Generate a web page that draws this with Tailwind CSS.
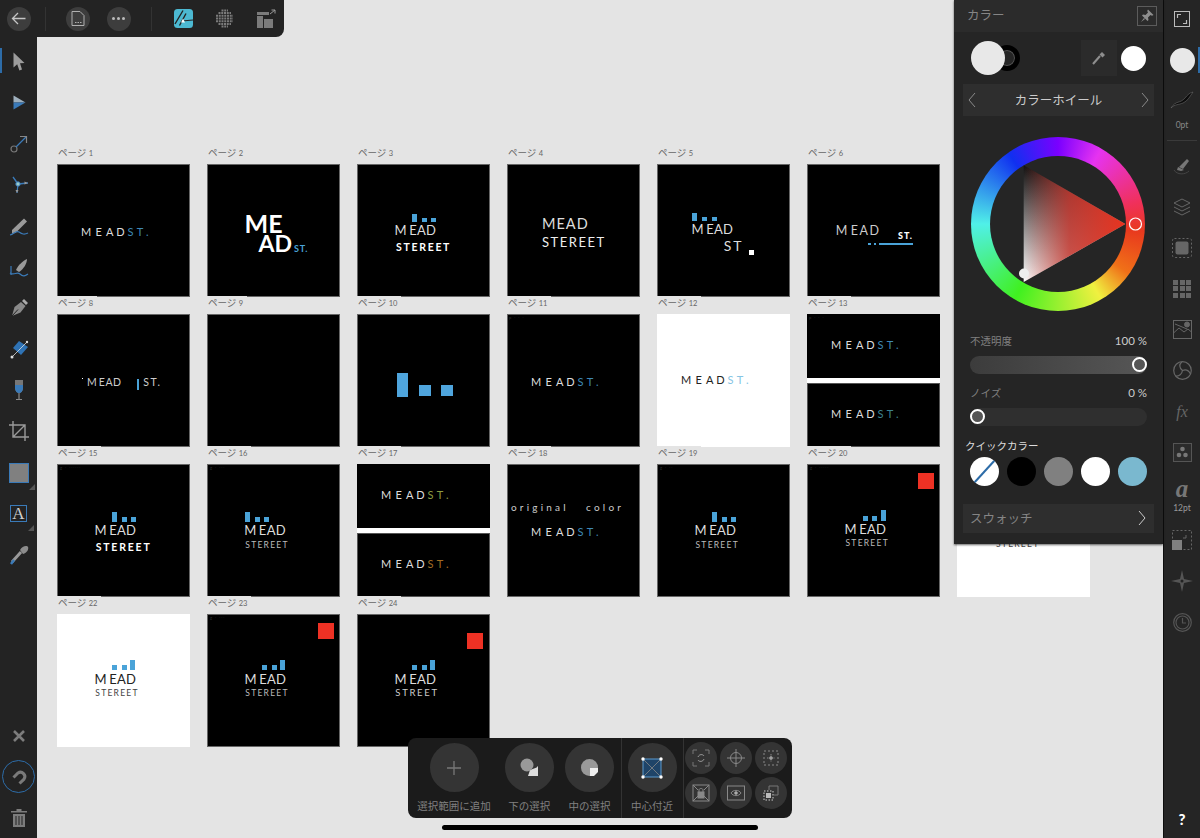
<!DOCTYPE html>
<html lang="ja">
  <head>
    <meta charset="UTF-8" />
    <meta name="viewport" content="width=device-width, initial-scale=1.0" />
    <title>Affinity Designer</title>
    <script src="https://cdn.jsdelivr.net/npm/@tailwindcss/browser@4"></script>
  </head>
  <body>
    <div class="relative flex w-[1200px] h-[838px] overflow-hidden bg-[#e4e4e4] font-['Lato','Noto_Sans_CJK_JP',sans-serif]">

      <!-- left tools -->
      <aside class="relative flex flex-col items-center w-[37px] shrink-0 pt-[40.5px] bg-[#232323]">
        <div class="absolute left-0 top-[48px] w-[2px] h-[25px] bg-[#2d6ca8]"></div>
        <div class="flex items-center justify-center h-[41.25px]"><svg class="w-6 h-6" viewBox="0 0 24 24"><path d="M6.5 3.5 17.5 14 13 14.2 15 20.5 12.4 21.5 10.2 15.3 6.5 18.5Z" fill="#9c9c9c"/></svg></div>
        <div class="flex items-center justify-center h-[41.25px]"><svg class="w-6 h-6" viewBox="0 0 24 24"><path d="M6.5 5.5 18.5 12.5 6.5 12.5Z" fill="#9fb0bd"/><path d="M6.5 12.5H18.5L6.5 19.5Z" fill="#3a7ab8"/></svg></div>
        <div class="flex items-center justify-center h-[41.25px]"><svg class="w-6 h-6" viewBox="0 0 24 24" fill="none"><circle cx="7" cy="18" r="3" stroke="#777" stroke-width="1.2"/><path d="M9 16 19 6" stroke="#3a7ab8" stroke-width="1.3"/><path d="M13 5.5H19.5V12" stroke="#888" stroke-width="1.2"/></svg></div>
        <div class="flex items-center justify-center h-[41.25px]"><svg class="w-6 h-6" viewBox="0 0 24 24" fill="none"><path d="M6 4 11 11M21 10 11 11M10 20 11 11" stroke="#3a7ab8" stroke-width="1.3"/><path d="M21 10 17.5 8.5V11.5ZM10 20 8.5 17H11.5Z" fill="#999"/><circle cx="11" cy="11" r="2.2" fill="#9cc" stroke="#3a7ab8"/></svg></div>
        <div class="flex items-center justify-center h-[41.25px]"><svg class="w-6 h-6" viewBox="0 0 24 24" fill="none"><path d="M5 16 17 4.500 20 7.500 8.500 19 5 19.500Z" fill="#9a9a9a"/><path d="M3 21C7 20 9 16 12 18S17 21 21 19" stroke="#3a7ab8" stroke-width="1.2"/></svg></div>
        <div class="flex items-center justify-center h-[41.25px]"><svg class="w-6 h-6" viewBox="0 0 24 24" fill="none"><path d="M9 15C11 10 16 6 20 4 20 8 17 14 12 17Z" fill="#9a9a9a"/><path d="M4 11V20M3 18C7 21 10 16 13 19S18 21 21 19" stroke="#3a7ab8" stroke-width="1.2"/></svg></div>
        <div class="flex items-center justify-center h-[41.25px]"><svg class="w-6 h-6" viewBox="0 0 24 24" fill="none"><path d="M5 20 7.500 11 14 6 18.500 10 13.500 16.500Z" fill="#8a8a8a"/><path d="M5 20 11 13.500" stroke="#232323" stroke-width="1"/><path d="M15 5 17 3 21 7 19 9Z" fill="#aaa"/></svg></div>
        <div class="flex items-center justify-center h-[41.25px]"><svg class="w-6 h-6" viewBox="0 0 24 24"><path d="M12 4 21 10 14 18 6 11Z" fill="#2f73b5"/><path d="M5 20 20 5" stroke="#ddd" stroke-width=".8"/><circle cx="5" cy="20" r="1.500" fill="#ddd"/><circle cx="20" cy="5" r="1.200" fill="#ddd"/></svg></div>
        <div class="flex items-center justify-center h-[41.25px]"><svg class="w-6 h-6" viewBox="0 0 24 24"><path d="M8 2H16V10C16 13 14 15 12 15S8 13 8 10Z" fill="#777"/><path d="M8 7H16V10C16 13 14 15 12 15S8 13 8 10Z" fill="#3a7ab8"/><path d="M11.400 15H12.600V21H15V22H9V21H11.400Z" fill="#8a8a8a"/></svg></div>
        <div class="flex items-center justify-center h-[41.25px]"><svg class="w-6 h-6" viewBox="0 0 24 24" fill="none" stroke="#9a9a9a" stroke-width="1.4"><path d="M6 2V18H22M2 6H18V22M6 18 18 6"/></svg></div>
        <div class="relative flex items-center justify-center h-[41.25px]"><div class="w-[18px] h-[18px] bg-[#808080] outline outline-1 outline-[#3a7ab8]"></div><svg class="absolute right-[-7px] bottom-[3px] w-[6px] h-[6px]" viewBox="0 0 6 6"><path d="M6 0V6H0Z" fill="#555"/></svg></div>
        <div class="relative flex items-center justify-center h-[41.25px]"><div class="flex items-center justify-center w-[17px] h-[17px] border border-[#3a7ab8] text-[17px] leading-none text-[#cfcfcf] font-['Liberation_Serif',serif]">A</div><svg class="absolute right-[-7px] bottom-[3px] w-[6px] h-[6px]" viewBox="0 0 6 6"><path d="M6 0V6H0Z" fill="#555"/></svg></div>
        <div class="flex items-center justify-center h-[41.25px]"><svg class="w-6 h-6" viewBox="0 0 24 24" fill="none"><path d="M5 19 14 9" stroke="#999" stroke-width="3"/><path d="M4 21 7 17" stroke="#3a7ab8" stroke-width="2.500"/><path d="M13 7C15 3 20 2 21 4S20 10 16 11Z" fill="#8c8c8c"/></svg></div>

        <div class="flex items-center justify-center h-[41px] mt-[139.75px]"><svg class="w-[14px] h-[14px]" viewBox="0 0 14 14"><path d="M2 2 12 12M12 2 2 12" stroke="#7c7c7c" stroke-width="2.600"/></svg></div>
        <div class="flex items-center justify-center h-[41px]"><div class="flex items-center justify-center w-[33px] h-[33px] shrink-0 rounded-full border border-[#2d6ca8]"><svg class="w-[18px] h-[18px]" viewBox="0 0 18 18" fill="none"><path d="M3.500 9.500 8 5A4.400 4.400 0 0 1 14 11.200L9.500 15.500" stroke="#7a7a7a" stroke-width="3"/></svg></div></div>
        <div class="flex items-center justify-center h-[41px]"><svg class="w-[18px] h-[20px]" viewBox="0 0 18 20" fill="#7c7c7c"><path d="M1 3H17V4.500H1ZM6.500 1H11.500V3H6.500ZM3 6H15V19H3Z"/><path d="M6 8V17M9 8V17M12 8V17" stroke="#232323" stroke-width="1"/></svg></div>
      </aside>

      <!-- artboards -->
      <main class="flex-1 pl-[20px] pt-[147px]">
        <div class="grid grid-cols-[repeat(7,133px)] gap-x-[17px]">

          <div>
            <p class="relative z-10 w-fit h-[18px] -mt-px pl-[1px] pr-1 bg-[#e4e4e4] text-[9.5px] leading-[14px] text-[#666] whitespace-nowrap">ページ <span class="text-[7.5px]">1</span></p>
            <div class="relative h-[133px] overflow-hidden bg-black ring-1 ring-inset ring-[#666]">
              <p class="absolute left-[24px] top-[62.4px] text-[11px] leading-none text-[#ddd] whitespace-nowrap"><span class="tracking-[4.2px]">ME</span><span class="tracking-[2.8px]">AD</span><span class="tracking-[3.4px] text-[#3f88b5]">ST.</span></p>
            </div>
          </div>
          <div>
            <p class="relative z-10 w-fit h-[18px] -mt-px pl-[1px] pr-1 bg-[#e4e4e4] text-[9.5px] leading-[14px] text-[#666] whitespace-nowrap">ページ <span class="text-[7.5px]">2</span></p>
            <div class="relative h-[133px] overflow-hidden bg-black ring-1 ring-inset ring-[#666]">
              <p class="absolute left-[37.5px] top-[47px] text-[25px] leading-none font-bold text-white">ME</p>
              <p class="absolute left-[51.5px] top-[68px] text-[23px] leading-none font-bold text-white">AD</p>
              <p class="absolute left-[87px] top-[79.5px] text-[9px] leading-none font-bold tracking-[.7px] text-[#4aa3d8]">ST.</p>
            </div>
          </div>
          <div>
            <p class="relative z-10 w-fit h-[18px] -mt-px pl-[1px] pr-1 bg-[#e4e4e4] text-[9.5px] leading-[14px] text-[#666] whitespace-nowrap">ページ <span class="text-[7.5px]">3</span></p>
            <div class="relative h-[133px] overflow-hidden bg-black ring-1 ring-inset ring-[#666]">
              <div class="absolute left-[54.5px] top-[50px] w-[5px] h-[8px] bg-[#4aa3d8]"></div>
              <div class="absolute left-[64.5px] top-[53.5px] w-[5px] h-[4.5px] bg-[#4aa3d8]"></div>
              <div class="absolute left-[74px] top-[53.5px] w-[5px] h-[4.5px] bg-[#4aa3d8]"></div>
              <p class="absolute left-[37.5px] top-[59.9px] text-[13px] leading-none text-[#ddd] whitespace-nowrap"><span class="tracking-[2.6px]">M</span><span class="tracking-[.3px]">EAD</span></p>
              <p class="absolute left-[39px] top-[77.5px] text-[10.5px] leading-none font-bold tracking-[1.7px] text-white whitespace-nowrap">STEREET</p>
            </div>
          </div>
          <div>
            <p class="relative z-10 w-fit h-[18px] -mt-px pl-[1px] pr-1 bg-[#e4e4e4] text-[9.5px] leading-[14px] text-[#666] whitespace-nowrap">ページ <span class="text-[7.5px]">4</span></p>
            <div class="relative h-[133px] overflow-hidden bg-black ring-1 ring-inset ring-[#666]">
              <p class="absolute left-[35px] top-[52.8px] text-[14.5px] leading-none tracking-[1px] text-[#ddd] whitespace-nowrap">MEAD</p>
              <p class="absolute left-[35px] top-[71.5px] text-[13px] leading-none tracking-[1.5px] text-[#eee] whitespace-nowrap">STEREET</p>
            </div>
          </div>
          <div>
            <p class="relative z-10 w-fit h-[18px] -mt-px pl-[1px] pr-1 bg-[#e4e4e4] text-[9.5px] leading-[14px] text-[#666] whitespace-nowrap">ページ <span class="text-[7.5px]">5</span></p>
            <div class="relative h-[133px] overflow-hidden bg-black ring-1 ring-inset ring-[#666]">
              <div class="absolute left-[35.3px] top-[49.3px] w-[5px] h-[8px] bg-[#4aa3d8]"></div>
              <div class="absolute left-[45px] top-[52.7px] w-[5px] h-[4.7px] bg-[#4aa3d8]"></div>
              <div class="absolute left-[54.7px] top-[52.7px] w-[5px] h-[4.7px] bg-[#4aa3d8]"></div>
              <p class="absolute left-[34.5px] top-[58.9px] text-[13px] leading-none text-[#ddd] whitespace-nowrap"><span class="tracking-[2.6px]">M</span><span class="tracking-[.3px]">EAD</span></p>
              <p class="absolute left-[66.7px] top-[75.3px] text-[14px] leading-none tracking-[2px] text-[#ddd]">ST</p>
              <div class="absolute left-[92.3px] top-[86.3px] w-[5px] h-[5px] bg-white"></div>
            </div>
          </div>
          <div>
            <p class="relative z-10 w-fit h-[18px] -mt-px pl-[1px] pr-1 bg-[#e4e4e4] text-[9.5px] leading-[14px] text-[#666] whitespace-nowrap">ページ <span class="text-[7.5px]">6</span></p>
            <div class="relative h-[133px] overflow-hidden bg-black ring-1 ring-inset ring-[#666]">
              <p class="absolute left-[28.7px] top-[60.6px] text-[12.5px] leading-none text-[#ccc] whitespace-nowrap"><span class="tracking-[3.5px]">M</span><span class="tracking-[1.5px]">EAD</span></p>
              <p class="absolute left-[91px] top-[67px] text-[9px] leading-none font-black tracking-[1px] text-white">ST.</p>
              <div class="absolute left-[60.7px] top-[78.5px] w-[3.3px] h-[2px] bg-[#4aa3d8]"></div>
              <div class="absolute left-[66.7px] top-[78.5px] w-[2.3px] h-[2px] bg-[#4aa3d8]"></div>
              <div class="absolute left-[72px] top-[78.5px] w-[34.3px] h-[2px] bg-[#4aa3d8]"></div>
            </div>
          </div>
          <div class="h-[150px]"></div>

          <div>
            <p class="relative z-10 w-fit h-[18px] -mt-px pl-[1px] pr-1 bg-[#e4e4e4] text-[9.5px] leading-[14px] text-[#666] whitespace-nowrap">ページ <span class="text-[7.5px]">8</span></p>
            <div class="relative h-[133px] overflow-hidden bg-black ring-1 ring-inset ring-[#666]">
              <div class="absolute left-[25px] top-[63.5px] w-px h-px bg-white"></div>
              <p class="absolute left-[30px] top-[63.2px] text-[10.5px] leading-none text-[#ccc] whitespace-nowrap"><span class="tracking-[2px]">M</span><span class="tracking-[.6px]">EAD</span></p>
              <div class="absolute left-[79.5px] top-[65px] w-[2.5px] h-[10.5px] bg-[#4aa3d8]"></div>
              <p class="absolute left-[86.3px] top-[63.2px] text-[10.5px] leading-none tracking-[1.5px] text-[#ccc]">ST.</p>
            </div>
          </div>
          <div>
            <p class="relative z-10 w-fit h-[18px] -mt-px pl-[1px] pr-1 bg-[#e4e4e4] text-[9.5px] leading-[14px] text-[#666] whitespace-nowrap">ページ <span class="text-[7.5px]">9</span></p>
            <div class="relative h-[133px] overflow-hidden bg-black ring-1 ring-inset ring-[#666]"></div>
          </div>
          <div>
            <p class="relative z-10 w-fit h-[18px] -mt-px pl-[1px] pr-1 bg-[#e4e4e4] text-[9.5px] leading-[14px] text-[#666] whitespace-nowrap">ページ <span class="text-[7.5px]">10</span></p>
            <div class="relative h-[133px] overflow-hidden bg-black ring-1 ring-inset ring-[#666]">
              <div class="absolute left-[39.5px] top-[59px] w-[11.5px] h-[23.5px] bg-[#4fa5dd]"></div>
              <div class="absolute left-[62.3px] top-[70.7px] w-[11.5px] h-[11.7px] bg-[#4fa5dd]"></div>
              <div class="absolute left-[84.3px] top-[70.7px] w-[11.5px] h-[11.7px] bg-[#4fa5dd]"></div>
            </div>
          </div>
          <div>
            <p class="relative z-10 w-fit h-[18px] -mt-px pl-[1px] pr-1 bg-[#e4e4e4] text-[9.5px] leading-[14px] text-[#666] whitespace-nowrap">ページ <span class="text-[7.5px]">11</span></p>
            <div class="relative h-[133px] overflow-hidden bg-black ring-1 ring-inset ring-[#666]">
              <p class="absolute left-[2px] top-[2px] text-[4px] leading-none tracking-[1px] text-[#333]">p · · ·</p>
              <p class="absolute left-[24px] top-[61.9px] text-[11px] leading-none text-[#ddd] whitespace-nowrap"><span class="tracking-[4.2px]">ME</span><span class="tracking-[2.8px]">AD</span><span class="tracking-[3.4px] text-[#3f88b5]">ST.</span></p>
            </div>
          </div>
          <div>
            <p class="relative z-10 w-fit h-[18px] -mt-px pl-[1px] pr-1 bg-[#e4e4e4] text-[9.5px] leading-[14px] text-[#666] whitespace-nowrap">ページ <span class="text-[7.5px]">12</span></p>
            <div class="relative h-[133px] overflow-hidden bg-white">
              <p class="absolute left-[24px] top-[60.1px] text-[11px] leading-none text-[#222] whitespace-nowrap"><span class="tracking-[4.2px]">ME</span><span class="tracking-[2.8px]">AD</span><span class="tracking-[3.4px] text-[#86c5e4]">ST.</span></p>
            </div>
          </div>
          <div>
            <p class="relative z-10 w-fit h-[18px] -mt-px pl-[1px] pr-1 bg-[#e4e4e4] text-[9.5px] leading-[14px] text-[#666] whitespace-nowrap">ページ <span class="text-[7.5px]">13</span></p>
            <div class="flex flex-col justify-between h-[133px] bg-white">
              <div class="relative h-[64px] overflow-hidden bg-black">
                <p class="absolute left-[2px] top-[2px] text-[4px] leading-none tracking-[1px] text-[#333]">p · · ·</p>
                <p class="absolute left-[24px] top-[25.4px] text-[11px] leading-none text-[#ddd] whitespace-nowrap"><span class="tracking-[4.2px]">ME</span><span class="tracking-[2.8px]">AD</span><span class="tracking-[3.4px] text-[#3f88b5]">ST.</span></p>
              </div>
              <div class="relative h-[64px] overflow-hidden bg-black ring-1 ring-inset ring-[#555]">
                <p class="absolute left-[24px] top-[25.4px] text-[11px] leading-none text-[#ddd] whitespace-nowrap"><span class="tracking-[4.2px]">ME</span><span class="tracking-[2.8px]">AD</span><span class="tracking-[3.4px] text-[#3d8290]">ST.</span></p>
              </div>
            </div>
          </div>
          <div class="h-[150px]"></div>

          <div>
            <p class="relative z-10 w-fit h-[18px] -mt-px pl-[1px] pr-1 bg-[#e4e4e4] text-[9.5px] leading-[14px] text-[#666] whitespace-nowrap">ページ <span class="text-[7.5px]">15</span></p>
            <div class="relative h-[133px] overflow-hidden bg-black ring-1 ring-inset ring-[#666]">
              <p class="absolute left-[3px] top-[2px] text-[4px] leading-none tracking-[1px] text-[#333]">g · ······</p>
              <div class="absolute left-[55.3px] top-[47.7px] w-[5px] h-[10.3px] bg-[#4aa3d8]"></div>
              <div class="absolute left-[64.7px] top-[53.3px] w-[5px] h-[4.7px] bg-[#4aa3d8]"></div>
              <div class="absolute left-[73.7px] top-[53.3px] w-[5px] h-[4.7px] bg-[#4aa3d8]"></div>
              <p class="absolute left-[37.5px] top-[59.9px] text-[13px] leading-none text-[#ddd] whitespace-nowrap"><span class="tracking-[2.6px]">M</span><span class="tracking-[.3px]">EAD</span></p>
              <p class="absolute left-[38.7px] top-[78px] text-[10.5px] leading-none font-bold tracking-[1.8px] text-white whitespace-nowrap">STEREET</p>
            </div>
          </div>
          <div>
            <p class="relative z-10 w-fit h-[18px] -mt-px pl-[1px] pr-1 bg-[#e4e4e4] text-[9.5px] leading-[14px] text-[#666] whitespace-nowrap">ページ <span class="text-[7.5px]">16</span></p>
            <div class="relative h-[133px] overflow-hidden bg-black ring-1 ring-inset ring-[#666]">
              <p class="absolute left-[3px] top-[2px] text-[4px] leading-none tracking-[1px] text-[#333]">g · ···</p>
              <div class="absolute left-[38.3px] top-[47.7px] w-[5px] h-[10.3px] bg-[#4aa3d8]"></div>
              <div class="absolute left-[47.7px] top-[53.3px] w-[5px] h-[4.7px] bg-[#4aa3d8]"></div>
              <div class="absolute left-[57px] top-[53.3px] w-[5px] h-[4.7px] bg-[#4aa3d8]"></div>
              <p class="absolute left-[37.2px] top-[59.9px] text-[13px] leading-none text-[#ddd] whitespace-nowrap"><span class="tracking-[2.6px]">M</span><span class="tracking-[.3px]">EAD</span></p>
              <p class="absolute left-[38.3px] top-[76.9px] text-[8.5px] leading-none tracking-[1.25px] text-[#bbb] whitespace-nowrap">STEREET</p>
            </div>
          </div>
          <div>
            <p class="relative z-10 w-fit h-[18px] -mt-px pl-[1px] pr-1 bg-[#e4e4e4] text-[9.5px] leading-[14px] text-[#666] whitespace-nowrap">ページ <span class="text-[7.5px]">17</span></p>
            <div class="flex flex-col justify-between h-[133px] bg-white">
              <div class="relative h-[64px] overflow-hidden bg-black">
                <p class="absolute left-[24px] top-[25.4px] text-[11px] leading-none text-[#ddd] whitespace-nowrap"><span class="tracking-[4.2px]">ME</span><span class="tracking-[2.8px]">AD</span><span class="tracking-[3.4px] text-[#8c9c42]">ST.</span></p>
              </div>
              <div class="relative h-[64px] overflow-hidden bg-black ring-1 ring-inset ring-[#555]">
                <p class="absolute left-[24px] top-[25.4px] text-[11px] leading-none text-[#ddd] whitespace-nowrap"><span class="tracking-[4.2px]">ME</span><span class="tracking-[2.8px]">AD</span><span class="tracking-[3.4px] text-[#a26c24]">ST.</span></p>
              </div>
            </div>
          </div>
          <div>
            <p class="relative z-10 w-fit h-[18px] -mt-px pl-[1px] pr-1 bg-[#e4e4e4] text-[9.5px] leading-[14px] text-[#666] whitespace-nowrap">ページ <span class="text-[7.5px]">18</span></p>
            <div class="relative h-[133px] overflow-hidden bg-black ring-1 ring-inset ring-[#666]">
              <p class="absolute left-[4px] top-[38px] text-[10px] leading-none tracking-[3.2px] text-[#ccc] whitespace-pre">original   color</p>
              <p class="absolute left-[24px] top-[61.9px] text-[11px] leading-none text-[#ddd] whitespace-nowrap"><span class="tracking-[4.2px]">ME</span><span class="tracking-[2.8px]">AD</span><span class="tracking-[3.4px] text-[#3f88b5]">ST.</span></p>
            </div>
          </div>
          <div>
            <p class="relative z-10 w-fit h-[18px] -mt-px pl-[1px] pr-1 bg-[#e4e4e4] text-[9.5px] leading-[14px] text-[#666] whitespace-nowrap">ページ <span class="text-[7.5px]">19</span></p>
            <div class="relative h-[133px] overflow-hidden bg-black ring-1 ring-inset ring-[#666]">
              <p class="absolute left-[3px] top-[2px] text-[4px] leading-none tracking-[1px] text-[#333]">g · ··</p>
              <div class="absolute left-[55.4px] top-[47.7px] w-[5px] h-[10.3px] bg-[#4aa3d8]"></div>
              <div class="absolute left-[65px] top-[53.3px] w-[5px] h-[4.7px] bg-[#4aa3d8]"></div>
              <div class="absolute left-[74px] top-[53.3px] w-[5px] h-[4.7px] bg-[#4aa3d8]"></div>
              <p class="absolute left-[37.5px] top-[59.9px] text-[13px] leading-none text-[#ddd] whitespace-nowrap"><span class="tracking-[2.6px]">M</span><span class="tracking-[.3px]">EAD</span></p>
              <p class="absolute left-[38.5px] top-[76.9px] text-[8.5px] leading-none tracking-[1.25px] text-[#bbb] whitespace-nowrap">STEREET</p>
            </div>
          </div>
          <div>
            <p class="relative z-10 w-fit h-[18px] -mt-px pl-[1px] pr-1 bg-[#e4e4e4] text-[9.5px] leading-[14px] text-[#666] whitespace-nowrap">ページ <span class="text-[7.5px]">20</span></p>
            <div class="relative h-[133px] overflow-hidden bg-black ring-1 ring-inset ring-[#666]">
              <p class="absolute left-[3px] top-[2px] text-[4px] leading-none tracking-[1px] text-[#333]">g · ·····</p>
              <div class="absolute left-[110.7px] top-[9px] w-[16px] h-[16px] bg-[#ee3124]"></div>
              <div class="absolute left-[55.8px] top-[51.5px] w-[5px] h-[5px] bg-[#4aa3d8]"></div>
              <div class="absolute left-[65px] top-[51.5px] w-[5px] h-[5px] bg-[#4aa3d8]"></div>
              <div class="absolute left-[74px] top-[46px] w-[5px] h-[10.5px] bg-[#4aa3d8]"></div>
              <p class="absolute left-[37.5px] top-[58.9px] text-[13px] leading-none text-[#ddd] whitespace-nowrap"><span class="tracking-[2.6px]">M</span><span class="tracking-[.3px]">EAD</span></p>
              <p class="absolute left-[38.5px] top-[75.3px] text-[8.5px] leading-none tracking-[1.25px] text-[#bbb] whitespace-nowrap">STEREET</p>
            </div>
          </div>
          <div>
            <p class="relative z-10 w-fit h-[18px] -mt-px pl-[1px] pr-1 bg-[#e4e4e4] text-[9.5px] leading-[14px] text-[#666] whitespace-nowrap">ページ <span class="text-[7.5px]">21</span></p>
            <div class="relative h-[133px] overflow-hidden bg-white">
              <p class="absolute left-[39px] top-[75.5px] text-[8.5px] leading-none tracking-[1.25px] text-[#444] whitespace-nowrap">STEREET</p>
            </div>
          </div>

          <div>
            <p class="relative z-10 w-fit h-[18px] -mt-px pl-[1px] pr-1 bg-[#e4e4e4] text-[9.5px] leading-[14px] text-[#666] whitespace-nowrap">ページ <span class="text-[7.5px]">22</span></p>
            <div class="relative h-[133px] overflow-hidden bg-white">
              <div class="absolute left-[55.3px] top-[50.7px] w-[5px] h-[5px] bg-[#4aa3d8]"></div>
              <div class="absolute left-[64.7px] top-[50.7px] w-[5px] h-[5px] bg-[#4aa3d8]"></div>
              <div class="absolute left-[73.3px] top-[45.7px] w-[5px] h-[10px] bg-[#4aa3d8]"></div>
              <p class="absolute left-[37.5px] top-[58.6px] text-[13px] leading-none text-[#222] whitespace-nowrap"><span class="tracking-[2.6px]">M</span><span class="tracking-[.3px]">EAD</span></p>
              <p class="absolute left-[38.3px] top-[74.9px] text-[8.5px] leading-none tracking-[1.25px] text-[#444] whitespace-nowrap">STEREET</p>
            </div>
          </div>
          <div>
            <p class="relative z-10 w-fit h-[18px] -mt-px pl-[1px] pr-1 bg-[#e4e4e4] text-[9.5px] leading-[14px] text-[#666] whitespace-nowrap">ページ <span class="text-[7.5px]">23</span></p>
            <div class="relative h-[133px] overflow-hidden bg-black ring-1 ring-inset ring-[#666]">
              <p class="absolute left-[3px] top-[2px] text-[4px] leading-none tracking-[1px] text-[#333]">g · ···</p>
              <div class="absolute left-[110.7px] top-[8.7px] w-[16px] h-[16px] bg-[#ee3124]"></div>
              <div class="absolute left-[55.3px] top-[50.7px] w-[5px] h-[5px] bg-[#4aa3d8]"></div>
              <div class="absolute left-[64.7px] top-[50.7px] w-[5px] h-[5px] bg-[#4aa3d8]"></div>
              <div class="absolute left-[73.3px] top-[45.7px] w-[5px] h-[10px] bg-[#4aa3d8]"></div>
              <p class="absolute left-[37.5px] top-[58.6px] text-[13px] leading-none text-[#ddd] whitespace-nowrap"><span class="tracking-[2.6px]">M</span><span class="tracking-[.3px]">EAD</span></p>
              <p class="absolute left-[38.3px] top-[74.9px] text-[8.5px] leading-none tracking-[1.25px] text-[#bbb] whitespace-nowrap">STEREET</p>
            </div>
          </div>
          <div>
            <p class="relative z-10 w-fit h-[18px] -mt-px pl-[1px] pr-1 bg-[#e4e4e4] text-[9.5px] leading-[14px] text-[#666] whitespace-nowrap">ページ <span class="text-[7.5px]">24</span></p>
            <div class="relative h-[133px] overflow-hidden bg-black ring-1 ring-inset ring-[#666]">
              <div class="absolute left-[110.3px] top-[19.3px] w-[16px] h-[16px] bg-[#ee3124]"></div>
              <div class="absolute left-[55.3px] top-[50.7px] w-[5px] h-[5px] bg-[#4aa3d8]"></div>
              <div class="absolute left-[64.7px] top-[50.7px] w-[5px] h-[5px] bg-[#4aa3d8]"></div>
              <div class="absolute left-[73.3px] top-[45.7px] w-[5px] h-[10px] bg-[#4aa3d8]"></div>
              <p class="absolute left-[37.5px] top-[58.6px] text-[13px] leading-none text-[#ddd] whitespace-nowrap"><span class="tracking-[2.6px]">M</span><span class="tracking-[.3px]">EAD</span></p>
              <p class="absolute left-[38.3px] top-[74px] text-[9.5px] leading-none tracking-[1.7px] text-[#ccc] whitespace-nowrap">STREET</p>
            </div>
          </div>
        </div>
      </main>

      <!-- right studio bar -->
      <aside class="flex flex-col items-center w-[37px] shrink-0 bg-[#252525] border-l border-[#0e0e0e]">
        <div class="flex items-center justify-center h-[38px]"><svg class="w-[16px] h-[16px]" viewBox="0 0 16 16" fill="none" stroke="#bbb"><rect x=".5" y=".5" width="15" height="15"/><path d="M3.500 7V3.500H7M12.500 9V12.500H9" stroke-width="1.200"/></svg></div>
        <div class="relative flex items-center justify-center w-full h-[44px]"><div class="w-[25px] h-[25px] rounded-full bg-[#e8e8e8]"></div><div class="absolute right-0 top-[9px] w-[2px] h-[26px] bg-[#2d6ca8]"></div></div>
        <div class="flex flex-col items-center w-[30px] h-[59px] border-b border-[#3a3a3a]"><svg class="w-[24px] h-[20px] mt-[8px] shrink-0" viewBox="0 0 24 20"><path d="M1 18C6 10 10 14 15 8S21 3 23 2C20 6 18 11 13 13S5 14 1 18Z" fill="#0c0c0c" stroke="#777" stroke-width=".5"/></svg><p class="mt-[11px] text-[8.5px] leading-none text-[#888]">0pt</p></div>
        <div class="mt-[4px] flex items-center justify-center h-[41px]"><svg class="w-[20px] h-[20px]" viewBox="0 0 20 20" fill="none"><path d="M7 11 15 3 17 5 11 13Z" fill="#777"/><path d="M6 11 12 14 9 15 5 14Z" fill="#777"/><path d="M2 14C5 19 13 19 17 15" stroke="#444"/></svg></div>
        <div class="flex items-center justify-center h-[41px]"><svg class="w-[20px] h-[20px]" viewBox="0 0 20 20" fill="none" stroke="#666"><path d="M10 2 18 6 10 10 2 6Z"/><path d="M2 10 10 14 18 10M2 14 10 18 18 14"/></svg></div>
        <div class="flex items-center justify-center h-[41px]"><svg class="w-[20px] h-[20px]" viewBox="0 0 20 20"><rect x=".5" y=".5" width="19" height="19" rx="2" fill="none" stroke="#666" stroke-dasharray="2 2"/><rect x="3.500" y="3.500" width="13" height="13" rx="2" fill="#666"/></svg></div>
        <div class="flex items-center justify-center h-[41px]"><div class="grid grid-cols-3 gap-[1.5px]"><div class="w-[5px] h-[5px] bg-[#666]"></div><div class="w-[5px] h-[5px] bg-[#666]"></div><div class="w-[5px] h-[5px] bg-[#666]"></div><div class="w-[5px] h-[5px] bg-[#666]"></div><div class="w-[5px] h-[5px] bg-[#666]"></div><div class="w-[5px] h-[5px] bg-[#666]"></div><div class="w-[5px] h-[5px] bg-[#666]"></div><div class="w-[5px] h-[5px] bg-[#666]"></div><div class="w-[5px] h-[5px] bg-[#666]"></div></div></div>
        <div class="flex items-center justify-center h-[41px]"><svg class="w-[19px] h-[19px]" viewBox="0 0 19 19" fill="none" stroke="#666"><rect x=".5" y=".5" width="18" height="18"/><path d="M.5 13 6 8 11 12 15 9 18.500 12M2 4 14 9"/><circle cx="14" cy="4.500" r="2.500" fill="#666"/></svg></div>
        <div class="flex items-center justify-center h-[41px]"><svg class="w-[19px] h-[19px]" viewBox="0 0 19 19" fill="none" stroke="#666" stroke-width="1.200"><circle cx="9.500" cy="9.500" r="8.800"/><path d="M9.500 9.500C6 7 6 3 9 1M9.500 9.500C13 8 16 10 17.500 13M9.500 9.500C9 13 6 15.500 2.500 15"/></svg></div>
        <div class="flex items-center justify-center h-[41px] font-['Liberation_Serif',serif] italic text-[16px] text-[#666]">fx</div>
        <div class="flex items-center justify-center h-[41px]"><svg class="w-[19px] h-[19px]" viewBox="0 0 19 19"><rect x=".5" y=".5" width="18" height="18" fill="#2b2b2b" stroke="#555"/><circle cx="9.500" cy="6" r="2.300" fill="#777"/><circle cx="6" cy="12" r="2.300" fill="#777"/><circle cx="12.500" cy="12" r="2.300" fill="#777"/></svg></div>
        <div class="flex flex-col items-center h-[46.5px]"><p class="mt-[3px] font-['Liberation_Serif',serif] italic font-bold text-[25px] leading-[26px] text-[#777]">a</p><p class="text-[8.5px] leading-[12px] text-[#999]">12pt</p></div>
        <div class="flex items-center justify-center h-[41px]"><svg class="w-[20px] h-[20px]" viewBox="0 0 20 20" fill="none"><rect x=".5" y=".5" width="19" height="19" stroke="#666" stroke-dasharray="2 2"/><rect x="0" y="10" width="10" height="10" fill="#808080"/><path d="M11 8H14V5" stroke="#666"/></svg></div>
        <div class="flex items-center justify-center h-[41px]"><svg class="w-[22px] h-[22px]" viewBox="0 0 22 22" fill="#555"><path d="M11 0 13 9 22 11 13 13 11 22 9 13 0 11 9 9Z"/><circle cx="11" cy="11" r="1.500" fill="#222"/></svg></div>
        <div class="flex items-center justify-center h-[41px]"><svg class="w-[19px] h-[19px]" viewBox="0 0 19 19" fill="none" stroke="#555" stroke-width="1.200"><circle cx="9.500" cy="9.500" r="8.800"/><circle cx="9.500" cy="9.500" r="6.500"/><path d="M9.500 5V10H13"/></svg></div>
        <div class="flex items-center justify-center h-[38px] mt-auto text-[15px] font-black text-white">?</div>
      </aside>

      <!-- top toolbar -->
      <header class="absolute z-20 left-0 top-0 flex items-center w-[284px] h-[37px] rounded-br-lg bg-[#232323]">
        <div class="flex items-center justify-center w-[24px] h-[24px] ml-[6.5px] rounded-full bg-[#3d3d3d]"><svg class="w-[15px] h-[13px]" viewBox="0 0 15 13" fill="none" stroke="#c4c4c4" stroke-width="1.300"><path d="M7 1 1.500 6.500 7 12M1.500 6.500H14.500"/></svg></div>
        <div class="w-px h-[24px] ml-[14px] bg-[#333]"></div>
        <div class="flex items-center justify-center w-[24px] h-[24px] ml-[20px] rounded-full bg-[#3d3d3d]"><svg class="w-[14px] h-[15px]" viewBox="0 0 14 15" fill="none" stroke="#b0b0b0"><path d="M1 .5H9L13 4.500V14.500H1Z"/><path d="M4 11.500H5.500M6.500 11.500H8M9 11.500H10.500" stroke-width="1.200"/></svg></div>
        <div class="flex items-center justify-center gap-[2px] w-[24px] h-[24px] ml-[17px] rounded-full bg-[#3d3d3d]"><div class="w-[3px] h-[3px] rounded-full bg-[#bbb]"></div><div class="w-[3px] h-[3px] rounded-full bg-[#bbb]"></div><div class="w-[3px] h-[3px] rounded-full bg-[#bbb]"></div></div>
        <div class="w-px h-[24px] ml-[20px] bg-[#333]"></div>
        <svg class="w-[19px] h-[19px] ml-[22px]" viewBox="0 0 19 19"><rect width="19" height="19" rx="3.500" fill="#4cb9d2"/><path d="M1 15 9 1.500M5.500 16.500 12 4.500" stroke="#232323" stroke-width="1.400" fill="none"/><path d="M8 12 19 11" stroke="#232323" stroke-width="1.200"/><path d="M7 13.500 9 9.500 11 13.500Z" fill="#fff"/></svg>
        <svg class="w-[19px] h-[19px] ml-[22px]" viewBox="0 0 19 19" fill="none" stroke="#7b7b7b" stroke-width="2" stroke-dasharray="2 .75"><path d="M6.500 1.500H13M3.500 4H16M1 6.800H18M1 9.500H18M1 12.200H18M3.500 15H16M6.500 17.500H13"/></svg>
        <svg class="w-[20px] h-[19px] ml-[22px]" viewBox="0 0 20 19"><path d="M1 3H13V6H1ZM1 7H7V19H1ZM8 10H17V19H8Z" fill="#7b7b7b"/><path d="M14 5 19 1M15.500 1H19V4.500" stroke="#999" fill="none"/></svg>
      </header>

      <!-- color panel -->
      <section class="absolute z-20 left-[954px] top-0 flex flex-col w-[209px] h-[544px] bg-[#252525] shadow-[0_1px_2px_rgba(0,0,0,.6)]">
        <div class="flex items-center justify-between h-[32px] pl-[13px] pr-[6px] bg-[#2b2b2b]">
          <p class="pt-[1px] text-[12.5px] text-[#858585]">カラー</p>
          <div class="flex items-center justify-center w-[20px] h-[20px] border border-[#5c5c5c]"><svg class="w-[14px] h-[14px]" viewBox="0 0 14 14" fill="#8e8e8e"><path d="M8 .5 13.500 6 12 6.800 10.500 6 8 8.500 8.500 11 7.500 12 2 6.500 3 5.500 5.500 6 8 3.500 7.200 2ZM4 9 1 13 5 10Z"/></svg></div>
        </div>
        <div class="flex items-center h-[52px]">
          <div class="relative z-10 w-[34px] h-[34px] ml-[16.5px] rounded-full bg-[#e8e8e8]"></div>
          <div class="w-[26px] h-[26px] -ml-[11px] rounded-full border-[5px] border-black bg-[#252525] shadow-[inset_0_0_0_1px_#555]"></div>
          <div class="flex items-center justify-center w-[36px] h-[36px] ml-[61.5px] bg-[#2b2b2b]"><svg class="w-[14px] h-[14px]" viewBox="0 0 14 14"><path d="M1 13 8 5" stroke="#8e8e8e" stroke-width="2"/><path d="M7.500 3.500 10 1 13 4 10.500 6.500Z" fill="#8e8e8e"/></svg></div>
          <div class="w-[25px] h-[25px] ml-[4px] rounded-full bg-white"></div>
        </div>
        <div class="flex items-center justify-between h-[32px] mx-[9px] px-[5px] bg-[#2e2e2e]">
          <svg class="w-[8px] h-[16px]" viewBox="0 0 8 16" fill="none" stroke="#8a8a8a"><path d="M7 1 1 8 7 15"/></svg>
          <p class="pt-[2px] text-[12.5px] text-[#cccccc]">カラーホイール</p>
          <svg class="w-[8px] h-[16px]" viewBox="0 0 8 16" fill="none" stroke="#8a8a8a"><path d="M1 1 7 8 1 15"/></svg>
        </div>
        <div class="relative w-[174px] h-[174px] ml-[17.3px] mt-[20.7px] rounded-full bg-[conic-gradient(#7a00ff,#e633f0_30deg,#f0305a_75deg,#e8391e_95deg,#f07018_125deg,#f0f040_150deg,#40f020_210deg,#50f0e8_270deg,#1030f0_325deg,#7a00ff)]">
          <div class="absolute inset-[19px] rounded-full bg-[#252525]"></div>
          <svg class="absolute left-0 top-0 w-[174px] h-[174px]" viewBox="0 0 174 174">
            <defs>
              <linearGradient id="tone" x1="0" y1="0" x2="0" y2="1"><stop offset="0" stop-color="#111"/><stop offset="1" stop-color="#fff"/></linearGradient>
              <linearGradient id="hue" x1="1" y1="0" x2="0" y2="0"><stop offset="0" stop-color="#e8331f"/><stop offset=".55" stop-color="#c8332a" stop-opacity=".8"/><stop offset="1" stop-color="#c8332a" stop-opacity="0"/></linearGradient>
            </defs>
            <path d="M52.700 28.300 154.400 87 52.700 145Z" fill="url(#tone)"/>
            <path d="M52.700 28.300 154.400 87 52.700 145Z" fill="url(#hue)"/>
            <circle cx="164.500" cy="87" r="6" fill="none" stroke="#fff" stroke-width="1.200"/>
            <circle cx="53" cy="136.500" r="5" fill="#eee"/>
          </svg>
        </div>
        <div class="flex items-center justify-between h-[16px] mt-[22px] mx-[16px]">
          <p class="pt-[3px] text-[10.5px] text-[#808080]">不透明度</p>
          <p class="text-[11.5px] text-[#cccccc]">100 %</p>
        </div>
        <div class="relative h-[18px] mt-[7px] mx-[16px] rounded-full bg-[linear-gradient(to_right,#3c3c3c,#565656)]">
          <div class="absolute right-0 top-[1.5px] w-[15px] h-[15px] rounded-full border-[2.5px] border-white bg-[#555]"></div>
        </div>
        <div class="flex items-center justify-between h-[16px] mt-[11px] mx-[16px]">
          <p class="pt-[3px] text-[10.5px] text-[#808080]">ノイズ</p>
          <p class="text-[11.5px] text-[#cccccc]">0 %</p>
        </div>
        <div class="relative h-[18px] mt-[7px] mx-[16px] rounded-full bg-[#2f2f2f]">
          <div class="absolute left-0 top-[1.5px] w-[15px] h-[15px] rounded-full border-[2.5px] border-white bg-[#555]"></div>
        </div>
        <p class="h-[16px] mt-[12px] ml-[11px] text-[10.5px] leading-[16px] text-[#dddddd]">クイックカラー</p>
        <div class="flex gap-[8px] mt-[3.5px] ml-[15.5px]">
          <div class="w-[29px] h-[29px] overflow-hidden rounded-full bg-white"><svg class="w-[29px] h-[29px]" viewBox="0 0 29 29"><path d="M4 26 25 3" stroke="#2d6ca8" stroke-width="2"/></svg></div>
          <div class="w-[29px] h-[29px] rounded-full bg-black"></div>
          <div class="w-[29px] h-[29px] rounded-full bg-[#808080]"></div>
          <div class="w-[29px] h-[29px] rounded-full bg-white"></div>
          <div class="w-[29px] h-[29px] rounded-full bg-[#7ab8cf]"></div>
        </div>
        <div class="flex items-center justify-between h-[29px] mt-[17.5px] mx-[9px] pl-[7px] pr-[8px] bg-[#2e2e2e]">
          <p class="pt-[3px] text-[12.5px] text-[#858585]">スウォッチ</p>
          <svg class="w-[8px] h-[16px]" viewBox="0 0 8 16" fill="none" stroke="#cccccc"><path d="M1 1 7 8 1 15"/></svg>
        </div>
      </section>

      <!-- context toolbar -->
      <section class="absolute z-20 left-[408px] top-[738px] flex w-[384px] h-[80px] rounded-lg bg-[#1b1b1b]">
        <div class="flex flex-col items-center w-[92px] pt-[5px]">
          <div class="flex items-center justify-center w-[49px] h-[49px] rounded-full bg-[#343434]"><svg class="w-[14px] h-[14px]" viewBox="0 0 14 14"><path d="M7 0V14M0 7H14" stroke="#777" stroke-width="1.300"/></svg></div>
          <p class="mt-[7px] text-[10.5px] leading-[14px] text-[#808080] whitespace-nowrap">選択範囲に追加</p>
        </div>
        <div class="flex flex-col items-center w-[58.5px] pt-[5px]">
          <div class="flex items-center justify-center w-[49px] h-[49px] shrink-0 rounded-full bg-[#343434]"><svg class="w-[19px] h-[19px]" viewBox="0 0 19 19"><path d="M8 18 18 8V18Z M10 12 18 9V18H8Z" fill="#ddd"/><circle cx="7" cy="7" r="6.500" fill="#999"/></svg></div>
          <p class="mt-[7px] text-[10.5px] leading-[14px] text-[#808080] whitespace-nowrap">下の選択</p>
        </div>
        <div class="flex flex-col items-center w-[62px] pt-[5px]">
          <div class="flex items-center justify-center w-[49px] h-[49px] shrink-0 rounded-full bg-[#343434]"><svg class="w-[17px] h-[17px]" viewBox="0 0 17 17"><circle cx="8.500" cy="8.500" r="8.500" fill="#999"/><path d="M9 9H17V13L13 17H9Z" fill="#eee"/></svg></div>
          <p class="mt-[7px] text-[10.5px] leading-[14px] text-[#808080] whitespace-nowrap">中の選択</p>
        </div>
        <div class="flex flex-col items-center w-[62px] pt-[5px] border-l border-[#333]">
          <div class="flex items-center justify-center w-[49px] h-[49px] shrink-0 rounded-full bg-[#343434]"><svg class="w-[22px] h-[22px]" viewBox="0 0 22 22" fill="none"><rect x="2" y="2" width="18" height="18" fill="#1f4468" stroke="#5a9ad0"/><path d="M2 2 20 20M20 2 2 20" stroke="#888" stroke-width=".8"/><circle cx="2" cy="2" r="1.700" fill="#fff"/><circle cx="20" cy="2" r="1.700" fill="#fff"/><circle cx="2" cy="20" r="1.700" fill="#fff"/><circle cx="20" cy="20" r="1.700" fill="#fff"/></svg></div>
          <p class="mt-[7px] text-[10.5px] leading-[14px] text-[#808080] whitespace-nowrap">中心付近</p>
        </div>
        <div class="grid grid-cols-[repeat(3,32px)] gap-[3px] content-start pl-[1.5px] pt-[4px] border-l border-[#333]">
          <div class="flex items-center justify-center w-[32px] h-[32px] rounded-full bg-[#343434]"><svg class="w-[18px] h-[18px]" viewBox="0 0 18 18" fill="none" stroke="#777"><path d="M1 5V1H5M13 1H17V5M1 13V17H5M13 17H17V13"/><path d="M6 8C7 5 11 5 12 7M12 10C11 13 7 13 6 11" stroke="#999"/></svg></div>
          <div class="flex items-center justify-center w-[32px] h-[32px] rounded-full bg-[#343434]"><svg class="w-[18px] h-[18px]" viewBox="0 0 18 18" fill="none" stroke="#888"><circle cx="9" cy="9" r="5.500"/><path d="M9 0V18M0 9H18"/></svg></div>
          <div class="flex items-center justify-center w-[32px] h-[32px] rounded-full bg-[#343434]"><svg class="w-[16px] h-[16px]" viewBox="0 0 16 16" fill="none" stroke="#888"><rect x="1" y="1" width="14" height="14" stroke-dasharray="2 2"/><path d="M8 4V12M4 8H12" stroke-dasharray="1.500 1"/><circle cx="8" cy="8" r="1.500" fill="#aaa"/></svg></div>
          <div class="flex items-center justify-center w-[32px] h-[32px] rounded-full bg-[#343434]"><svg class="w-[18px] h-[18px]" viewBox="0 0 18 18" fill="none" stroke="#888"><rect x="1" y="1" width="16" height="16"/><path d="M1 1 6 6M17 1 12 6M1 17 6 12M17 17 12 12"/><rect x="6" y="8" width="6" height="6" fill="#888"/><path d="M7 8V6C7 4 11 4 11 6V8"/></svg></div>
          <div class="flex items-center justify-center w-[32px] h-[32px] rounded-full bg-[#343434]"><svg class="w-[18px] h-[18px]" viewBox="0 0 18 18" fill="none" stroke="#888"><rect x=".5" y="2" width="17" height="14"/><path d="M4 9C6 5.500 12 5.500 14 9 12 12.500 6 12.500 4 9Z"/><circle cx="9" cy="9" r="1.500" fill="#bbb"/></svg></div>
          <div class="flex items-center justify-center w-[32px] h-[32px] rounded-full bg-[#343434]"><svg class="w-[16px] h-[16px]" viewBox="0 0 16 16" fill="none"><rect x="1" y="6" width="9" height="9" stroke="#ccc" stroke-dasharray="1.500 1.500"/><path d="M6 5V1H15V10H11" stroke="#777"/><path d="M3 8H8V13H3Z" fill="#bbb"/></svg></div>
        </div>
      </section>

      <!-- home indicator -->
      <div class="absolute z-20 left-[442px] top-[825px] w-[316px] h-[5px] rounded-full bg-black"></div>
    </div>
  </body>
</html>
